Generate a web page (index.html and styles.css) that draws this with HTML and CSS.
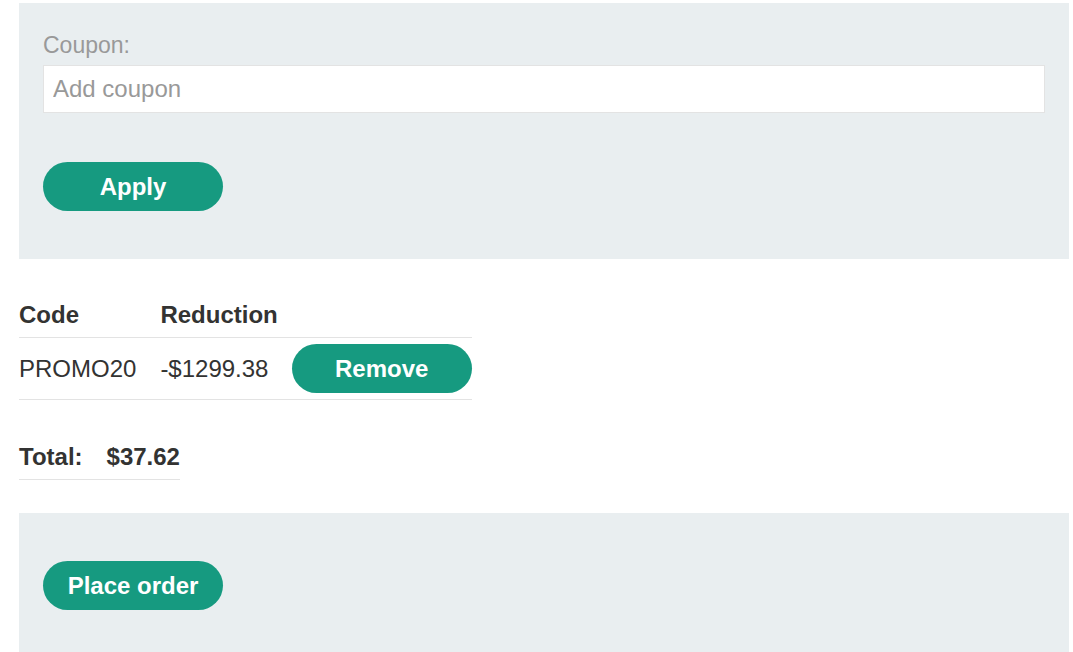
FILE: index.html
```html
<!DOCTYPE html>
<html>
<head>
<meta charset="utf-8">
<link rel="stylesheet" href="styles.css">
</head>
<body>
<div class="page">
  <form class="panel coupon-panel">
    <label class="coupon-label" for="coupon">Coupon:</label>
    <input class="coupon-input" id="coupon" type="text" placeholder="Add coupon">
    <button class="btn" type="button">Apply</button>
  </form>

  <table class="codes">
    <thead>
      <tr><th>Code</th><th>Reduction</th><th></th></tr>
    </thead>
    <tbody>
      <tr>
        <td>PROMO20</td>
        <td>-$1299.38</td>
        <td class="btn-cell"><button class="btn" type="button">Remove</button></td>
      </tr>
    </tbody>
  </table>

  <table class="total">
    <tr><th>Total:</th><th>$37.62</th></tr>
  </table>

  <div class="panel order-panel">
    <button class="btn" type="button">Place order</button>
  </div>
</div>
</body>
</html>
```

FILE: styles.css
```css
html, body {
  margin: 0;
  padding: 0;
  background: #ffffff;
}

body {
  font-family: "Liberation Sans", Arial, sans-serif;
  font-size: 24px;
  color: #333332;
}

.page {
  padding: 3px 4px 0 19px;
}

.panel {
  background: #e9eef0;
  padding: 0 24px;
  margin: 0;
}

.coupon-panel {
  display: flex;
  flex-direction: column;
  align-items: flex-start;
  padding-top: 27px;
  padding-bottom: 48px;
}

.coupon-label {
  color: #999999;
  font-size: 23px;
  line-height: 30px;
  margin-bottom: 5px;
}

.coupon-input {
  box-sizing: border-box;
  width: 100%;
  height: 48px;
  border: 1px solid #e3e3e3;
  background: #ffffff;
  font-family: inherit;
  font-size: 24px;
  padding: 0 9px;
  margin: 0 0 49px 0;
  color: #333332;
  outline: none;
}

.coupon-input::placeholder {
  color: #999999;
}

.btn {
  box-sizing: border-box;
  width: 180px;
  height: 49px;
  border: none;
  border-radius: 25px;
  background: #169a80;
  color: #ffffff;
  font-family: inherit;
  font-weight: bold;
  font-size: 24px;
  padding: 0;
  cursor: pointer;
}

.codes {
  border-collapse: collapse;
  margin-top: 39px;
}

.codes th {
  text-align: left;
  font-weight: bold;
  padding: 2px 24px 7px 0;
  line-height: 30px;
  border-bottom: 1px solid #e3e3e3;
}

.codes td {
  padding: 6px 24px 6px 0;
  line-height: 30px;
  border-bottom: 1px solid #e3e3e3;
}

.codes th:nth-child(2),
.codes td:nth-child(2) {
  padding-right: 14px;
}

.codes td.btn-cell,
.codes th:last-child {
  padding-right: 0;
}

.total {
  border-collapse: collapse;
  margin-top: 39px;
}

.total th {
  text-align: left;
  font-weight: bold;
  padding: 3px 24px 7px 0;
  line-height: 30px;
  border-bottom: 1px solid #e3e3e3;
}

.total th:last-child {
  padding-right: 0;
}

.order-panel {
  margin-top: 33px;
  padding-top: 48px;
  padding-bottom: 48px;
}
```
